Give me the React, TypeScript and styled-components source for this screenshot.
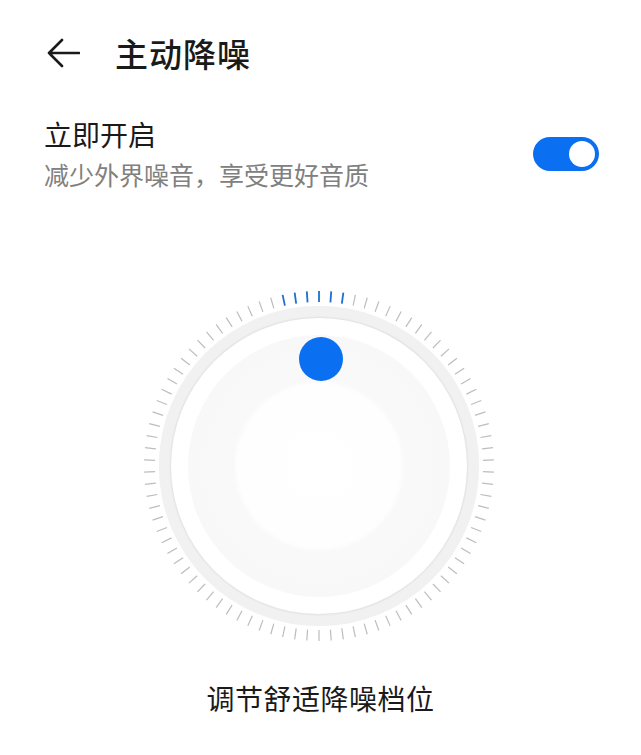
import React from 'react'
import styled, { createGlobalStyle } from 'styled-components'

const GlobalStyle = createGlobalStyle`
  body {
    margin: 0;
    background: #ffffff;
    font-family: "Noto Sans CJK SC", "Noto Sans", sans-serif;
    color: #1a1a1a;
  }
`

const Page = styled.div`
  width: 641px;
  height: 755px;
  display: flex;
  flex-direction: column;
  overflow: hidden;
`

const Header = styled.header`
  height: 106px;
  display: flex;
  align-items: center;
  padding-left: 44px;
  gap: 33px;
`

const BackButton = styled.button`
  width: 38px;
  height: 38px;
  padding: 0;
  border: none;
  background: none;
  display: flex;
  align-items: center;
  justify-content: center;
`

const Title = styled.h1`
  margin: 0;
  font-size: 33px;
  font-weight: 500;
  line-height: 1;
  letter-spacing: 1px;
`

const SettingRow = styled.div`
  display: flex;
  align-items: center;
  justify-content: space-between;
  padding: 10px 42px 0 44px;
`

const SettingText = styled.div`
  display: flex;
  flex-direction: column;
  gap: 6px;
`

const SettingTitle = styled.div`
  font-size: 28px;
  line-height: 36px;
`

const SettingHint = styled.div`
  font-size: 25px;
  line-height: 32px;
  color: #808080;
`

const Toggle = styled.div<{ on: boolean }>`
  width: 66px;
  height: 34px;
  border-radius: 17px;
  background: ${p => (p.on ? '#0a6ff0' : '#d0d0d0')};
  position: relative;
  margin-top: 2px;
`

const ToggleThumb = styled.div<{ on: boolean }>`
  position: absolute;
  top: 4px;
  left: ${p => (p.on ? '36px' : '4px')};
  width: 26px;
  height: 26px;
  border-radius: 50%;
  background: #ffffff;
`

const DialArea = styled.div`
  flex: 1;
  display: flex;
  flex-direction: column;
  align-items: center;
  padding-top: 98px;
`

const Dial = styled.div`
  position: relative;
  width: 356px;
  height: 356px;
  display: flex;
  align-items: center;
  justify-content: center;
  margin-left: -3px;
`

const Ticks = styled.svg`
  position: absolute;
  inset: 0;
`

const Ring = styled.div`
  width: 320px;
  height: 320px;
  border-radius: 50%;
  background: #f1f1f1;
  box-shadow: 0 0 1px rgba(0, 0, 0, 0.06);
  display: flex;
  align-items: center;
  justify-content: center;
`

const Face = styled.div`
  width: 296px;
  height: 296px;
  border-radius: 50%;
  background: #ffffff;
  box-shadow: 0 0 2px 1px rgba(0, 0, 0, 0.07);
  display: flex;
  align-items: center;
  justify-content: center;
`

const Track = styled.div`
  width: 262px;
  height: 262px;
  border-radius: 50%;
  background: radial-gradient(circle closest-side, #ffffff 0%, #fefefe 62%, #f9f9f9 66%, #f8f8f8 100%);
`

const Knob = styled.div`
  position: absolute;
  top: 49px;
  left: 50%;
  width: 44px;
  height: 44px;
  margin-left: -20px;
  border-radius: 50%;
  background: #0a6ff0;
`

const Caption = styled.div`
  margin-top: 36px;
  font-size: 28px;
  line-height: 36px;
  color: #1a1a1a;
  letter-spacing: 0.5px;
`

const TICK_COUNT = 90
const activeTicks = [-3, -2, -1, 0, 1, 2]

function DialTicks() {
  const c = 178
  const lines = []
  for (let i = 0; i < TICK_COUNT; i++) {
    const idx = i > TICK_COUNT / 2 ? i - TICK_COUNT : i
    const a = (i * 360) / TICK_COUNT
    const active = activeTicks.includes(idx)
    lines.push(
      <line
        key={i}
        x1={c}
        y1={c - 164}
        x2={c}
        y2={c - 175}
        stroke={active ? '#1f6fd0' : '#bdbdbd'}
        strokeWidth={active ? 1.8 : 1.2}
        transform={`rotate(${a} ${c} ${c})`}
      />
    )
  }
  return (
    <Ticks width="356" height="356" viewBox="0 0 356 356">
      {lines}
    </Ticks>
  )
}

export default function App() {
  const on = true
  return (
    <Page>
      <GlobalStyle />
      <Header>
        <BackButton aria-label="返回">
          <svg width="34" height="30" viewBox="0 0 34 30" fill="none">
            <path d="M16 2 L3 15 L16 28 M3 15 H33" stroke="#1a1a1a" strokeWidth="2.6" strokeLinecap="round" strokeLinejoin="round" />
          </svg>
        </BackButton>
        <Title>主动降噪</Title>
      </Header>
      <SettingRow>
        <SettingText>
          <SettingTitle>立即开启</SettingTitle>
          <SettingHint>减少外界噪音，享受更好音质</SettingHint>
        </SettingText>
        <Toggle on={on}>
          <ToggleThumb on={on} />
        </Toggle>
      </SettingRow>
      <DialArea>
        <Dial>
          <DialTicks />
          <Ring>
            <Face>
              <Track />
            </Face>
          </Ring>
          <Knob />
        </Dial>
        <Caption>调节舒适降噪档位</Caption>
      </DialArea>
    </Page>
  )
}
